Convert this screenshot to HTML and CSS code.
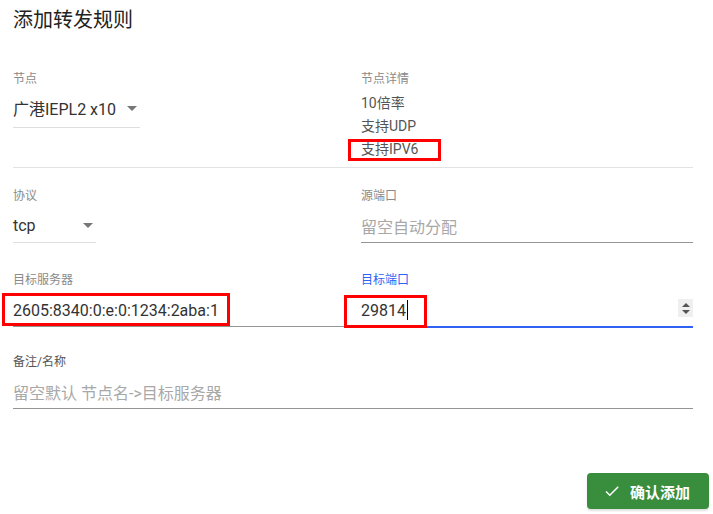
FILE: index.html
```html
<!DOCTYPE html>
<html lang="zh-CN">
<head>
<meta charset="utf-8">
<title>添加转发规则</title>
<link rel="stylesheet" href="styles.css">
</head>
<body>
<div class="dialog">
  <h1 class="title">添加转发规则</h1>
  <div class="form">
    <div class="row row-first">
      <div class="field">
        <div class="label">节点</div>
        <div class="select select-node">
          <span class="value">广港IEPL2 x10</span>
          <span class="arrow"></span>
        </div>
      </div>
      <div class="field">
        <div class="label">节点详情</div>
        <div class="details">
          <div>10倍率</div>
          <div>支持UDP</div>
          <div><span class="mark mark-ipv6">支持IPV6</span></div>
        </div>
      </div>
    </div>
    <div class="row row-second">
      <div class="field">
        <div class="label">协议</div>
        <div class="select select-proto">
          <span class="value">tcp</span>
          <span class="arrow"></span>
        </div>
      </div>
      <div class="field">
        <div class="label">源端口</div>
        <div class="input"><span class="placeholder">留空自动分配</span></div>
      </div>
    </div>
    <div class="row row-third">
      <div class="field">
        <div class="label">目标服务器</div>
        <div class="input"><span class="value mark mark-addr">2605:8340:0:e:0:1234:2aba:1</span></div>
      </div>
      <div class="field">
        <div class="label label-active">目标端口</div>
        <div class="input input-active">
          <span class="value mark mark-port">29814<span class="caret"></span></span>
          <span class="spinner"><span class="up"></span><span class="down"></span></span>
        </div>
      </div>
    </div>
    <div class="row row-fourth">
      <div class="field field-wide">
        <div class="label label-dark">备注/名称</div>
        <div class="input"><span class="placeholder">留空默认 节点名-&gt;目标服务器</span></div>
      </div>
    </div>
  </div>
  <div class="actions">
    <button class="btn-confirm" type="button">
      <svg class="check" width="18" height="18" viewBox="0 0 24 24"><path d="M9 16.17L4.83 12l-1.42 1.41L9 19 21 7l-1.41-1.41z" fill="#fff"/></svg>
      <span>确认添加</span>
    </button>
  </div>
</div>
</body>
</html>
```

FILE: styles.css
```css
* { box-sizing: border-box; }
html, body { margin: 0; padding: 0; background: #fff; }
body {
  font-family: Roboto, "Noto Sans CJK SC", sans-serif;
  color: #333;
  width: 713px;
  height: 514px;
  overflow: hidden;
}
.dialog { width: 713px; }
.title {
  margin: 0;
  padding: 4px 13px 0;
  font-size: 20px;
  line-height: 32px;
  font-weight: 400;
  color: #222;
}
.form { padding: 0 20px 0 13px; }
.row {
  display: grid;
  grid-template-columns: 1fr 1fr;
  column-gap: 16px;
  align-items: start;
}
.row-first {
  margin-top: 35px;
  padding-bottom: 6px;
  border-bottom: 1px solid #e3e3e3;
}
.row-second { margin-top: 20px; }
.row-third { margin-top: 29px; }
.row-fourth { margin-top: 26px; }
.field-wide { grid-column: 1 / span 2; }
.label {
  font-size: 12px;
  line-height: 16px;
  color: #8a8a8a;
}
.label-dark { color: #555; }
.label-active { color: #2e63f4; }
.select {
  display: flex;
  align-items: center;
  justify-content: space-between;
  border-bottom: 1px solid #dedede;
  font-size: 16px;
  color: #333;
  padding-right: 3px;
}
.select-node { width: 127px; height: 41px; padding-top: 2px; }
.select-proto { width: 83px; height: 39px; padding-top: 5px; }
.arrow {
  width: 0; height: 0;
  border-left: 5px solid transparent;
  border-right: 5px solid transparent;
  border-top: 5px solid #777;
}
.details {
  margin-top: 5px;
  font-size: 14px;
  line-height: 23px;
  color: #555;
}
.input {
  display: flex;
  align-items: center;
  justify-content: space-between;
  height: 39px;
  padding-top: 6px;
  font-size: 16px;
  border-bottom: 1px solid #949494;
}
.input-active {
  height: 40px;
  border-bottom: 2px solid #2e63f4;
}
.placeholder { color: #a8a8a8; }
.value { color: #333; }
.mark { position: relative; }
.mark::after {
  content: "";
  position: absolute;
  border: 3px solid #f00;
}
.mark-ipv6 { display: inline-block; line-height: 23px; }
.mark-ipv6::after { left: -13px; right: -23px; top: 1px; bottom: 0; }
.mark-addr::after { left: -11px; right: -11px; top: -8px; bottom: -6px; }
.mark-port::after { left: -17px; right: -19px; top: -5px; bottom: -8px; }
.caret {
  display: inline-block;
  width: 1px;
  height: 20px;
  background: #000;
  margin-left: 1px;
  vertical-align: -4px;
}
.spinner {
  width: 15px;
  height: 18px;
  background: #efefef;
  display: flex;
  flex-direction: column;
  align-items: center;
  justify-content: center;
  gap: 3px;
  margin-top: -4px;
}
.spinner .up {
  width: 0; height: 0;
  border-left: 4px solid transparent;
  border-right: 4px solid transparent;
  border-bottom: 4px solid #555;
}
.spinner .down {
  width: 0; height: 0;
  border-left: 4px solid transparent;
  border-right: 4px solid transparent;
  border-top: 4px solid #555;
}
.actions {
  display: flex;
  justify-content: flex-end;
  padding-right: 4px;
  margin-top: 64px;
}
.btn-confirm {
  display: flex;
  align-items: center;
  gap: 9px;
  height: 36px;
  width: 122px;
  padding: 0 0 0 16px;
  border: none;
  border-radius: 4px;
  background: #388e3c;
  color: #fff;
  font-family: Roboto, "Noto Sans CJK SC", sans-serif;
  font-size: 15px;
  font-weight: 700;
  box-shadow: 0 2px 2px rgba(0,0,0,.12);
}
.check { display: block; }
```
